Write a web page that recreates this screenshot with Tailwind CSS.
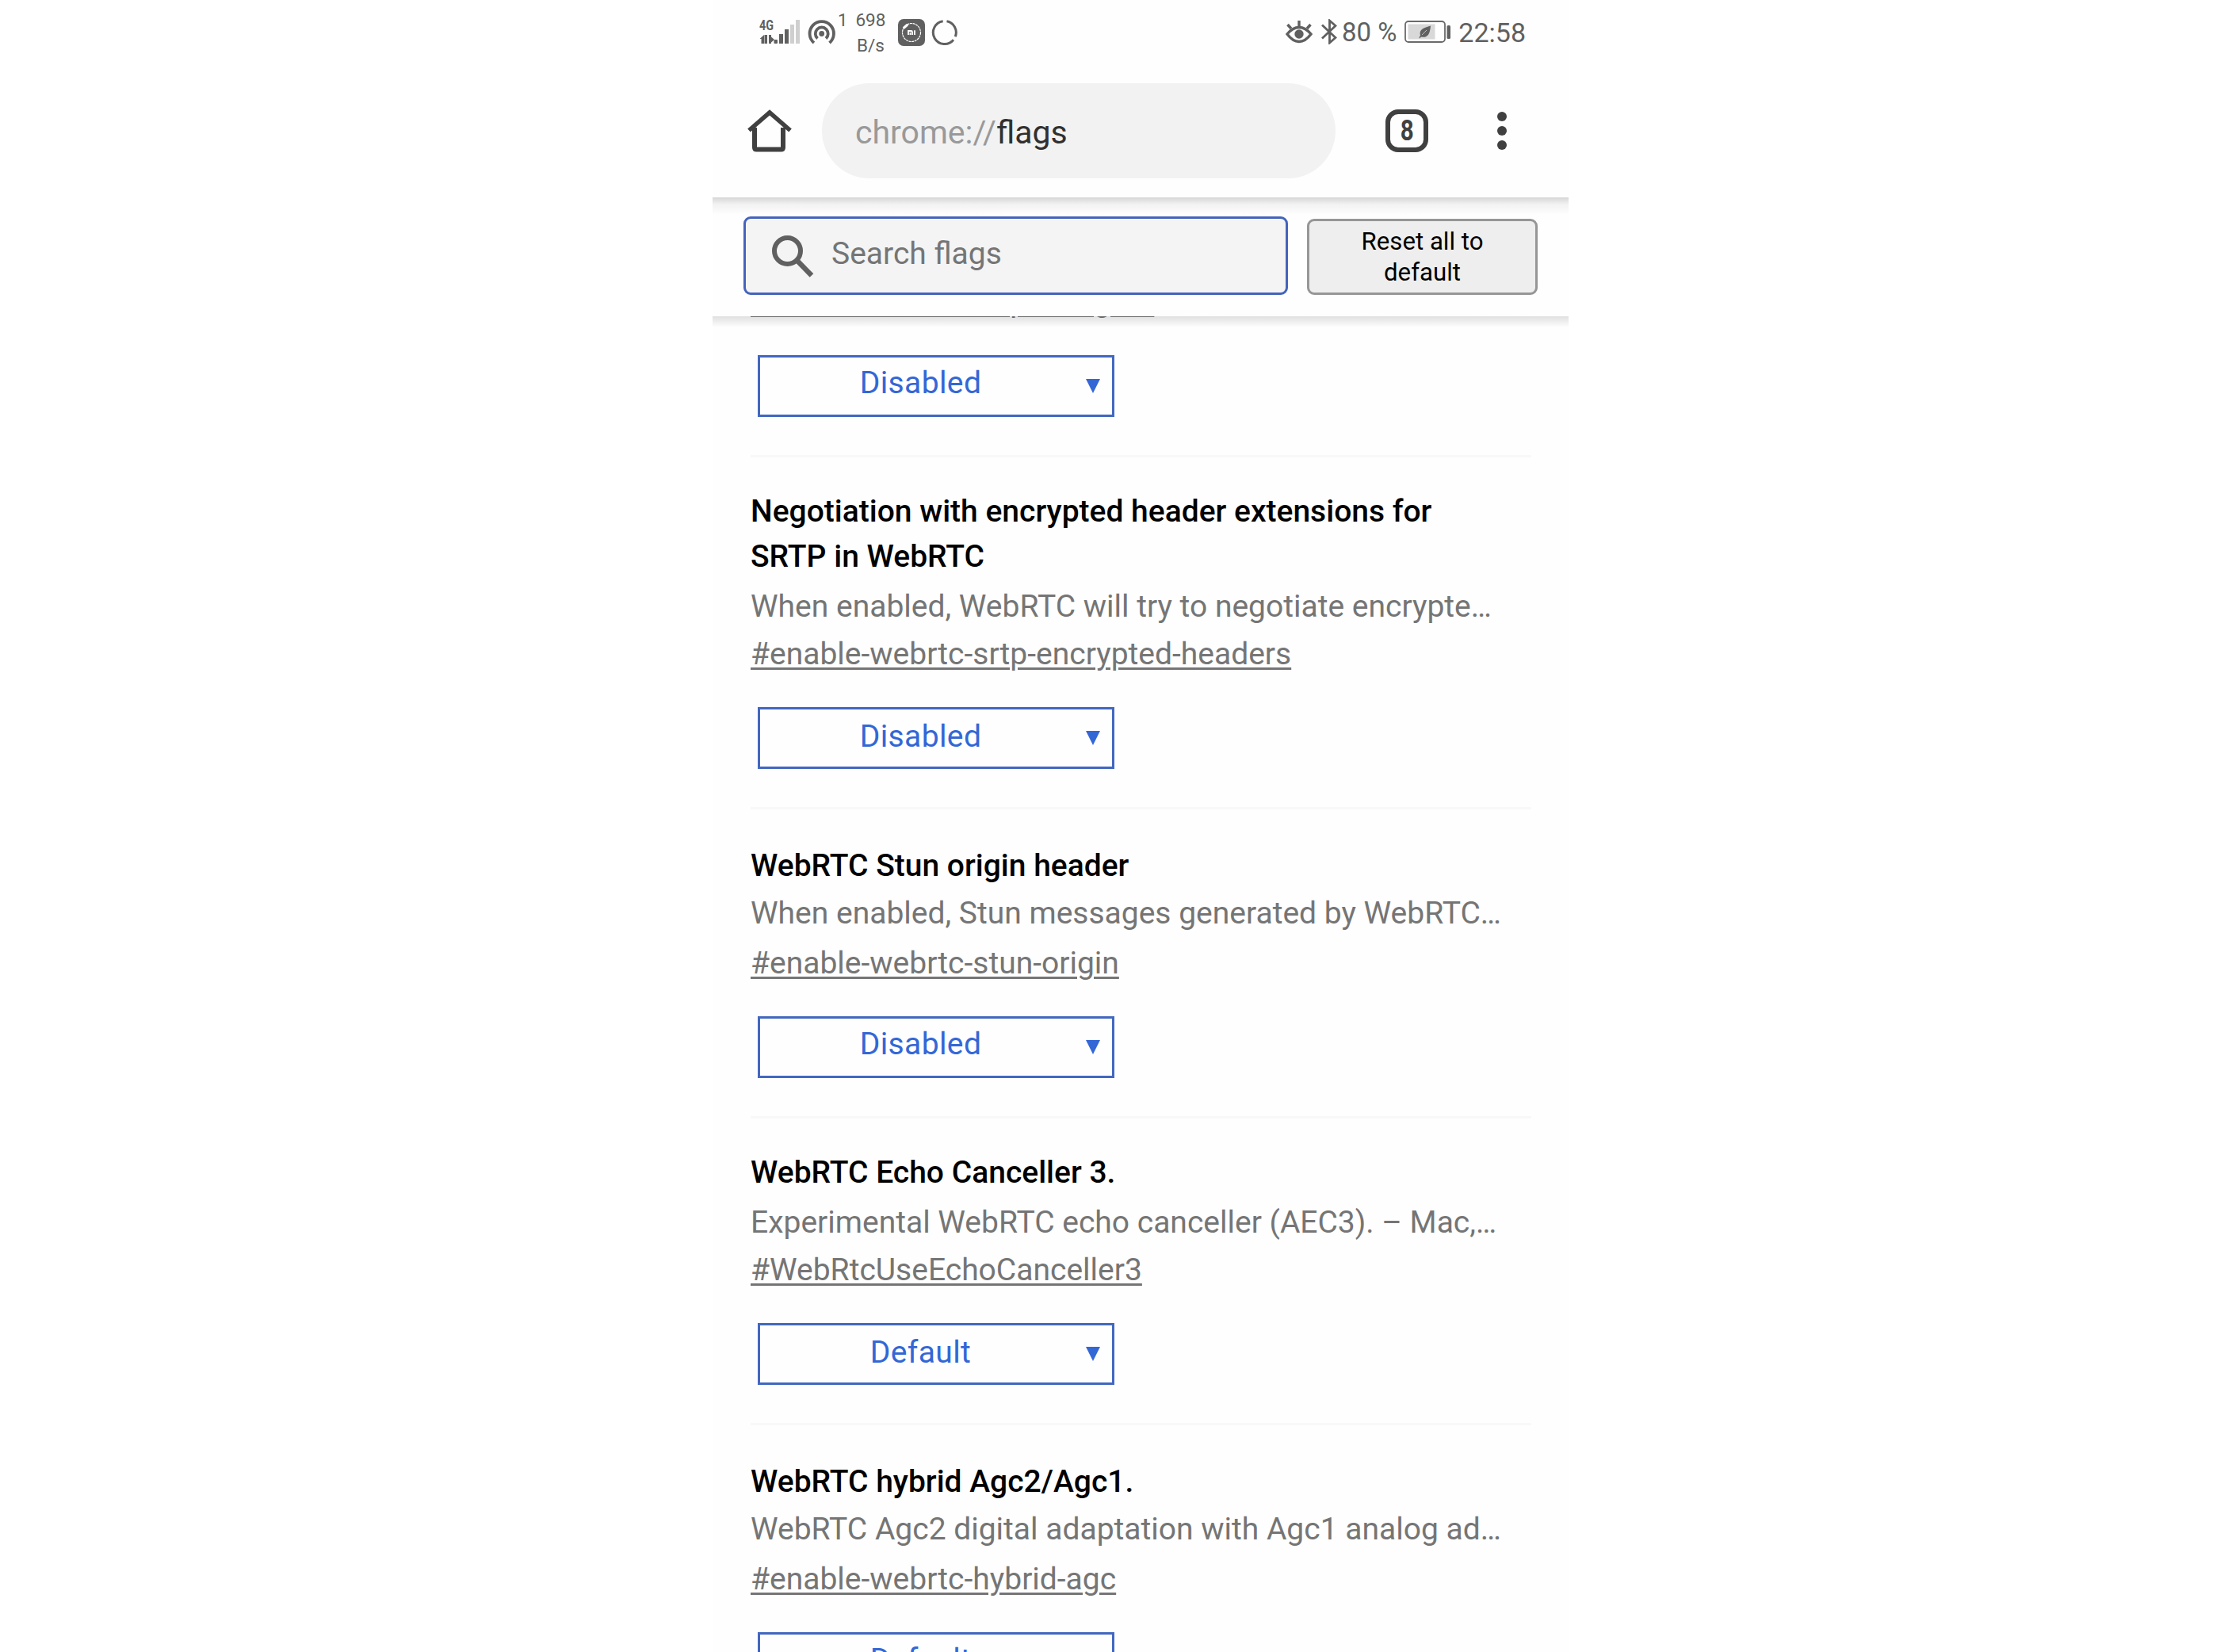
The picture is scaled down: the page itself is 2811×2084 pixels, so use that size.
<!DOCTYPE html>
<html lang="en">
<head>
  <meta charset="UTF-8">
  <meta name="viewport" content="width=device-width, initial-scale=1.0">
  <title>chrome://flags</title>
  <script src="https://cdn.jsdelivr.net/npm/@tailwindcss/browser@4"></script>
</head>
<body class="bg-white font-['Roboto',sans-serif]">
  <div class="ml-[899px] w-[1080px] h-[2084px] overflow-hidden bg-[#fefefe] flex flex-col">

    <!-- Status Bar -->
    <div class="h-[84px] shrink-0 flex justify-between pl-[58px] pr-[54px] text-[#606060]">
      <div class="flex items-start">
        <!-- Signal -->
        <svg class="mt-[22px] w-[54px] h-[36px]" viewBox="0 0 54 36" fill="#606060">
          <text x="1" y="16" font-family="Roboto" font-weight="700" font-size="18.5" textLength="18" lengthAdjust="spacingAndGlyphs">4G</text>
          <path d="M1.500 27l5.500-5v11H3.500v-6zM7.500 22h3.500v11H7.500zM13 22h3v11h-3zM16 24.500l4 3.500-4 3.500z" />
          <rect x="19.500" y="28" width="4.500" height="5" rx="1" />
          <rect x="26" y="21" width="5" height="12" />
          <rect x="33" y="15" width="5" height="18" />
          <rect x="40" y="9" width="5" height="24" fill="#cfcfcf" />
          <rect x="47" y="3" width="5" height="30" fill="#cfcfcf" />
        </svg>
        <!-- Hotspot -->
        <svg class="ml-[8px] mt-[22px] w-[36px] h-[36px]" viewBox="0 0 36 36" fill="none" stroke="#606060" stroke-width="3.8">
          <path d="M8 32A15.2 15.2 0 1 1 27.5 32" />
          <path d="M12.5 26.5A8 8 0 1 1 23 26.5" />
          <circle cx="17.7" cy="20.5" r="3.4" fill="#606060" stroke="none" />
        </svg>
        <span class="ml-[2px] mt-[14px] text-[22px] leading-6">1</span>
        <div class="ml-[9px] mt-[9px] w-[40px] text-center text-[22.5px] leading-[32px]">698<br>B/s</div>
        <!-- App badge -->
        <svg class="ml-[15px] mt-[24px] w-[34px] h-[34px]" viewBox="0 0 34 34" fill="none">
          <rect width="34" height="34" rx="7" fill="#606060" />
          <circle cx="17" cy="17" r="11.5" stroke="#fff" stroke-width="1.2" stroke-dasharray="3 .7" />
          <path d="M7 12l5-5" stroke="#606060" stroke-width="6" />
          <path d="M7.5 11l4-3.5" stroke="#fff" stroke-width="3" stroke-linecap="round" />
          <path d="M13 20v-5h3.5q1.5 0 1.5 1.5V20M15.5 17v3M21 14.3V20" stroke="#fff" stroke-width="1.8" />
        </svg>
        <!-- Ring -->
        <svg class="ml-[8px] mt-[24px] w-[34px] h-[34px]" viewBox="0 0 34 34" fill="none" stroke="#606060" stroke-width="3">
          <path d="M19.5 2.7A14.5 14.5 0 0 1 30.3 22.2M28 26.3A14.5 14.5 0 1 1 14.7 2.7" />
        </svg>
      </div>

      <div class="flex items-start">
        <!-- Eye -->
        <svg class="mt-[24px] w-[34px] h-[32px]" viewBox="0 0 34 32" fill="none" stroke="#606060" stroke-width="3.4">
          <path d="M2 19Q9 10.5 17 10.5T32 19Q25 28.5 17 28.5T2 19z" />
          <circle cx="17" cy="19" r="5.7" fill="#606060" stroke="none" />
          <path d="M17 2v7M2.5 7l4.5 5M31.5 7l-4.5 5" />
        </svg>
        <!-- Bluetooth -->
        <svg class="ml-[11px] mt-[24px] w-[20px] h-[32px]" viewBox="0 0 20 32" fill="none" stroke="#606060" stroke-width="2.8">
          <path d="M1 7.5L18 23.5L10.5 30V2L18 8.5L1 24.5" />
        </svg>
        <span class="ml-[6px] mt-[21px] text-[33px] leading-10">80 %</span>
        <!-- Battery -->
        <svg class="ml-[10px] mt-[26px] w-[58px] h-[28px]" viewBox="0 0 58 28" fill="none">
          <rect x="1" y="1" width="50" height="26" rx="4" stroke="#6a6a6a" stroke-width="1.8" />
          <rect x="4.5" y="4.500" width="34" height="19" fill="#d8d8d8" />
          <path d="M33 6.5C32 19 28 22 21 20.5L19 22.5L18.5 21L20 19C18 11 24 9 33 6.5z" fill="#606060" />
          <path d="M22 18L28 12" stroke="#d8d8d8" stroke-width=".8" />
          <rect x="53.5" y="6" width="4.500" height="17" rx="1.5" fill="#606060" />
        </svg>
        <span class="ml-[10px] mt-[21px] text-[34px] leading-10">22:58</span>
      </div>
    </div>

    <!-- Toolbar -->
    <div class="h-[165px] shrink-0 flex items-start pt-[21px]">
      <svg class="ml-[44px] mt-[32px] w-[56px] h-[56px]" viewBox="0 0 56 56" fill="none" stroke="#404040" stroke-width="6" stroke-linejoin="round">
        <path d="M9 24V49q0 2.500 2.500 2.500h31q2.500 0 2.500-2.500V24" />
        <path d="M2 27.5L28 5L54 27.5" stroke-width="5.500" stroke-linejoin="miter" />
      </svg>
      <div class="ml-[38px] w-[648px] h-[120px] rounded-full bg-[#f2f2f2] flex items-center pl-[42px] text-[41px] text-[#999]">
        <span class="pt-[6px]">chrome://<span class="text-[#303030]">flags</span></span>
      </div>
      <div class="ml-[63px] mt-[33px] w-[54px] h-[54px] rounded-[16px] border-[6px] border-[#404040] flex items-center justify-center">
        <span class="scale-x-[.82] text-[36px] leading-none font-bold text-[#404040]">8</span>
      </div>
      <div class="ml-[87px] mt-[36px] flex flex-col gap-[6px]">
        <span class="size-[12px] rounded-full bg-[#404040]"></span>
        <span class="size-[12px] rounded-full bg-[#404040]"></span>
        <span class="size-[12px] rounded-full bg-[#404040]"></span>
      </div>
    </div>

    <!-- Search header -->
    <div class="relative z-10 h-[150px] shrink-0 bg-[#fefefe]">
      <div class="absolute inset-x-0 top-0 h-[22px] bg-linear-to-b from-[#d6d6d6] via-[#f2f2f2] via-40% to-[#fefefe]"></div>
      <div class="absolute inset-x-0 top-full h-[14px] bg-linear-to-b from-black/12 to-transparent"></div>
      <div class="relative flex items-end pt-[24px] pl-[39px]">
        <div class="w-[687px] h-[99px] rounded-[9px] border-[3px] border-[#4563bb] bg-[#f4f4f4] flex items-center">
          <svg class="ml-[32px] w-[54px] h-[54px]" viewBox="0 0 54 54" fill="none" stroke="#606060" stroke-width="6">
            <circle cx="20.5" cy="20.5" r="16.5" />
            <path d="M32 32L51 51.5" stroke-width="6.5" />
          </svg>
          <span class="ml-[22px] pb-[4px] text-[39px] text-[#757575]">Search flags</span>
        </div>
        <button class="ml-[24px] w-[291px] h-[96px] rounded-[9px] border-[3px] border-[#969696] bg-[#eee] text-[31.2px] leading-[39px] text-black">Reset all to<br>default</button>
      </div>
    </div>

    <!-- Flags -->
    <div class="-mt-[49px] pl-[48px] pr-[47px] text-[39px] leading-[60px] text-[#757575]">

      <div class="pb-[48px] border-b-[3px] border-[#f8f8f8]">
        <a class="block underline decoration-[3px] underline-offset-[4px]">#enable-webrtc-srtp-aes-gcm</a>
        <div class="mt-[38px] ml-[9px] w-[450px] h-[78px] border-[3px] border-[#4267c0] flex items-start text-[#3367d6]">
          <span class="w-[405px] text-center leading-[64px] tracking-[.01em]">Disabled</span>
          <svg class="ml-[6px] mt-[27px] w-[18px] h-[18px]" viewBox="0 0 18 18" fill="#3367d6"><path d="M0 0h18L9 18z" /></svg>
        </div>
      </div>

      <div class="pt-[40px] pb-[48px] border-b-[3px] border-[#f8f8f8]">
        <h3 class="leading-[57px] font-medium text-black">Negotiation with encrypted header extensions for<br>SRTP in WebRTC</h3>
        <p class="mt-[4px] whitespace-nowrap">When enabled, WebRTC will try to negotiate encrypte…</p>
        <a class="block underline decoration-[3px] underline-offset-[4px]">#enable-webrtc-srtp-encrypted-headers</a>
        <div class="mt-[37px] ml-[9px] w-[450px] h-[78px] border-[3px] border-[#4267c0] flex items-start text-[#3367d6]">
          <span class="w-[405px] text-center leading-[68px] tracking-[.01em]">Disabled</span>
          <svg class="ml-[6px] mt-[27px] w-[18px] h-[18px]" viewBox="0 0 18 18" fill="#3367d6"><path d="M0 0h18L9 18z" /></svg>
        </div>
      </div>

      <div class="pt-[43px] pb-[48px] border-b-[3px] border-[#f8f8f8]">
        <h3 class="leading-[57px] font-medium text-black">WebRTC Stun origin header</h3>
        <p class="mt-[1px] whitespace-nowrap">When enabled, Stun messages generated by WebRTC…</p>
        <a class="mt-[3px] block underline decoration-[3px] underline-offset-[4px]">#enable-webrtc-stun-origin</a>
        <div class="mt-[37px] ml-[9px] w-[450px] h-[78px] border-[3px] border-[#4267c0] flex items-start text-[#3367d6]">
          <span class="w-[405px] text-center leading-[64px] tracking-[.01em]">Disabled</span>
          <svg class="ml-[6px] mt-[27px] w-[18px] h-[18px]" viewBox="0 0 18 18" fill="#3367d6"><path d="M0 0h18L9 18z" /></svg>
        </div>
      </div>

      <div class="pt-[40px] pb-[48px] border-b-[3px] border-[#f8f8f8]">
        <h3 class="leading-[57px] font-medium text-black">WebRTC Echo Canceller 3.</h3>
        <p class="mt-[4px] whitespace-nowrap">Experimental WebRTC echo canceller (AEC3). – Mac,…</p>
        <a class="block underline decoration-[3px] underline-offset-[4px]">#WebRtcUseEchoCanceller3</a>
        <div class="mt-[37px] ml-[9px] w-[450px] h-[78px] border-[3px] border-[#4267c0] flex items-start text-[#3367d6]">
          <span class="w-[405px] text-center leading-[68px] tracking-[.01em]">Default</span>
          <svg class="ml-[6px] mt-[27px] w-[18px] h-[18px]" viewBox="0 0 18 18" fill="#3367d6"><path d="M0 0h18L9 18z" /></svg>
        </div>
      </div>

      <div class="pt-[43px]">
        <h3 class="leading-[57px] font-medium text-black">WebRTC hybrid Agc2/Agc1.</h3>
        <p class="mt-[1px] whitespace-nowrap">WebRTC Agc2 digital adaptation with Agc1 analog ad…</p>
        <a class="mt-[3px] block underline decoration-[3px] underline-offset-[4px]">#enable-webrtc-hybrid-agc</a>
        <div class="mt-[37px] ml-[9px] w-[450px] h-[78px] border-[3px] border-[#4267c0] flex items-start text-[#3367d6]">
          <span class="w-[405px] text-center leading-[64px] tracking-[.01em]">Default</span>
          <svg class="ml-[6px] mt-[27px] w-[18px] h-[18px]" viewBox="0 0 18 18" fill="#3367d6"><path d="M0 0h18L9 18z" /></svg>
        </div>
      </div>
    </div>
  </div>
</body>
</html>
